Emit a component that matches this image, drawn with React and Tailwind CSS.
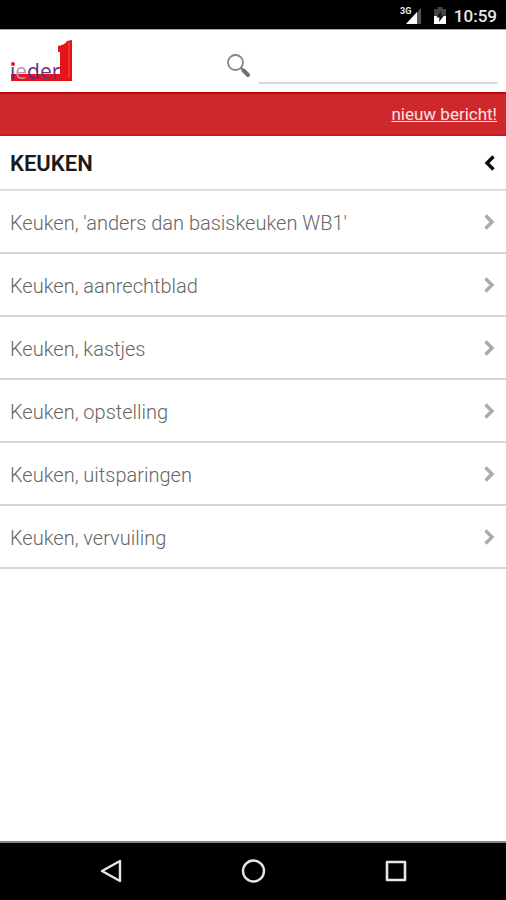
import React from "react";

const items = [
  "Keuken, 'anders dan basiskeuken WB1'",
  "Keuken, aanrechtblad",
  "Keuken, kastjes",
  "Keuken, opstelling",
  "Keuken, uitsparingen",
  "Keuken, vervuiling",
];

function StatusBar() {
  return (
    <div className="flex h-[30px] items-center justify-end border-b border-[#aaaaaa] bg-black pr-[9px] pt-[2px] text-white">
      <svg width="24" height="20" viewBox="0 0 24 20" className="mr-[9px]" aria-label="3G signaal">
        <path d="M21 2V18H6Z" fill="#555" />
        <path d="M17 6V18H6Z" fill="#fff" />
        <text x="0" y="8" fontSize="9" fontWeight="700" fill="#eee" className="font-['Roboto',sans-serif]">3G</text>
      </svg>
      <svg width="14" height="20" viewBox="0 0 14 20" className="mr-[7px]" aria-label="Batterij">
        <path d="M4.500 1h5v2H13v8H1V3h3.500Z" fill="#444" />
        <path d="M1 10h12v8H1Z" fill="#fff" />
        <path d="M8 5 3.500 11.500H6.500L6 16l5-6.500H8Z" fill="#111" />
      </svg>
      <span className="text-[17px] leading-5 font-medium text-[#e8e8e8]">10:59</span>
    </div>
  );
}

function Logo() {
  return (
    <svg width="64" height="50" viewBox="0 0 64 50" className="mt-[6px]" aria-label="ieder1">
      <path d="M2 35H51V13H49V7Q56 6 58 2L63 1V42H2Z" fill="#e5141c" />
      <path d="M2 20H51V35H2Z" fill="#ffffff" />
      <path d="M60 3V39" stroke="#f23b35" strokeWidth="1.500" />
      <g fontSize="21" className="font-['Open_Sans','Noto_Sans',sans-serif]">
        <text x="1" y="40" fill="#5d2f80">
          ı<tspan fill="#b795b5">e</tspan><tspan fill="#5d2f80">d</tspan><tspan fill="#5b3a8c">e</tspan><tspan fill="#8a2468">r</tspan>
        </text>
      </g>
      <circle cx="4" cy="25" r="2" fill="#e5141c" />
    </svg>
  );
}

function SearchIcon() {
  return (
    <svg width="24" height="24" viewBox="0 0 24 24" fill="none">
      <circle cx="8.500" cy="8.500" r="7.500" stroke="#858585" strokeWidth="1.800" />
      <path d="M14 14 17 17" stroke="#777" strokeWidth="2" />
      <path d="M16.500 16.500 21 21" stroke="#707070" strokeWidth="4" strokeLinecap="round" />
    </svg>
  );
}

function Chevron() {
  return (
    <svg width="12" height="18" viewBox="0 0 12 18" fill="none" stroke="#aaaaaa" strokeWidth="3.400">
      <path d="M1.500 2.500 8 9 1.500 15.500" />
    </svg>
  );
}

export default function App() {
  return (
    <div className="flex min-h-screen flex-col bg-white font-['Roboto',sans-serif]">
      <StatusBar />
      <header className="flex h-[62px] items-center justify-between pl-[9px] pr-2">
        <Logo />
        <label className="flex w-[271px] items-center gap-[7px]">
          <span className="pt-[9px]"><SearchIcon /></span>
          <input
            type="search"
            aria-label="Zoeken"
            className="mt-[14px] h-8 min-w-0 flex-1 rounded-[2px] border-b-2 border-[#d5dadd] bg-transparent px-2 text-lg outline-none"
          />
        </label>
      </header>
      <div className="flex h-11 items-center justify-end border-y-2 border-t-[#c00a0c] border-b-[#c9181b] bg-[#cd282c] pr-[9px]">
        <a href="#bericht" className="text-[17px] leading-6 text-[#fbe3e3] underline">nieuw bericht!</a>
      </div>
      <main className="flex-1">
        <div className="flex h-[55px] items-center justify-between border-b-2 border-[#dddddd] pl-[10px] pr-[10px]">
          <h1 className="pt-[3px] text-[22px] leading-7 font-semibold text-[#1a1a1a]">KEUKEN</h1>
          <button type="button" aria-label="Terug">
            <svg width="14" height="18" viewBox="0 0 14 18" fill="none" stroke="#0a0a0a" strokeWidth="3.400">
              <path d="M11.500 2.500 5 9 11.500 15.500" />
            </svg>
          </button>
        </div>
        <ul>
          {items.map((item) => (
            <li key={item}>
              <a href="#item" className="flex h-[63px] items-center justify-between border-b-2 border-[#d6d6d6] pl-[10px] pr-[10px]">
                <span className="pt-[3px] text-xl font-light text-[#666666]">{item}</span>
                <Chevron />
              </a>
            </li>
          ))}
        </ul>
      </main>
      <nav className="flex h-[59px] items-center justify-center gap-[118px] border-t-2 border-[#888888] bg-black">
        <button type="button" aria-label="Terug">
          <svg width="24" height="26" viewBox="0 0 24 26" fill="none" stroke="#e6e6e6" strokeWidth="2.400" strokeLinejoin="round">
            <path d="M22 2V22L4 12Z" />
          </svg>
        </button>
        <button type="button" aria-label="Start">
          <svg width="26" height="26" viewBox="0 0 26 26" fill="none" stroke="#e6e6e6" strokeWidth="2.400">
            <circle cx="13.500" cy="12" r="10.500" />
          </svg>
        </button>
        <button type="button" aria-label="Overzicht">
          <svg width="24" height="26" viewBox="0 0 24 26" fill="none" stroke="#e6e6e6" strokeWidth="2.600" strokeLinejoin="round">
            <path d="M3 3H21V21H3Z" />
          </svg>
        </button>
      </nav>
    </div>
  );
}
